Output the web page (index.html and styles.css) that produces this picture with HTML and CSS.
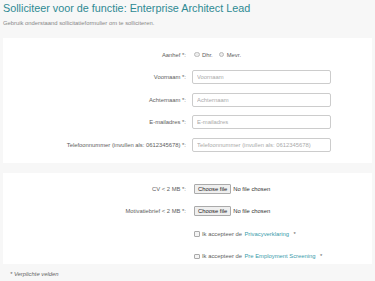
FILE: index.html
```html
<!DOCTYPE html>
<html lang="nl">
<head>
  <meta charset="UTF-8">
  <title>Solliciteren</title>
  <link rel="stylesheet" href="styles.css">
</head>
<body>

  <div class="page">
    <h1 class="title">Solliciteer voor de functie: Enterprise Architect Lead</h1>
    <p class="intro">Gebruik onderstaand sollicitatieformulier om te solliciteren.</p>

    <div class="panel">
      <div class="row">
        <span class="label">Aanhef *:</span>
        <div class="radios">
          <label class="option"><input type="radio" name="aanhef" class="radio"> Dhr.</label>
          <label class="option"><input type="radio" name="aanhef" class="radio"> Mevr.</label>
        </div>
      </div>

      <div class="row">
        <label class="label" for="voornaam">Voornaam *:</label>
        <input class="field" id="voornaam" type="text" placeholder="Voornaam">
      </div>

      <div class="row">
        <label class="label" for="achternaam">Achternaam *:</label>
        <input class="field" id="achternaam" type="text" placeholder="Achternaam">
      </div>

      <div class="row">
        <label class="label" for="email">E-mailadres *:</label>
        <input class="field" id="email" type="text" placeholder="E-mailadres">
      </div>

      <div class="row">
        <label class="label" for="telefoon">Telefoonnummer (invullen als: 0612345678) *:</label>
        <input class="field" id="telefoon" type="text" placeholder="Telefoonnummer (invullen als: 0612345678)">
      </div>
    </div>

    <div class="panel panel-files">
      <div class="row">
        <span class="label">CV &lt; 2 MB *:</span>
        <div class="file">
          <button type="button" class="file-btn">Choose file</button>
          <span>No file chosen</span>
        </div>
      </div>

      <div class="row">
        <span class="label">Motivatiebrief &lt; 2 MB *:</span>
        <div class="file">
          <button type="button" class="file-btn">Choose file</button>
          <span>No file chosen</span>
        </div>
      </div>

      <div class="row">
        <span></span>
        <label class="option check"><input type="checkbox" class="box"> Ik accepteer de <a href="#">Privacyverklaring</a> <span class="req">*</span></label>
      </div>

      <div class="row">
        <span></span>
        <label class="option check"><input type="checkbox" class="box"> Ik accepteer de <a href="#">Pre Employment Screening</a> <span class="req">*</span></label>
      </div>
    </div>

    <p class="note">* Verplichte velden</p>
  </div>

</body>
</html>
```

FILE: styles.css
```css
body {
  margin: 0;
  background-color: #f7f7f7;
  font-family: "Liberation Sans", Arial, sans-serif;
  font-size: 5.85px;
  color: #5e5e5e;
}

.page {
  padding: 2px 3px 0;
}

.title {
  margin: 0;
  font-size: 10.8px;
  font-weight: normal;
  line-height: 12.4px;
  color: #2e8a93;
}

.intro {
  margin: 5.6px 0 0;
  line-height: 6.7px;
  color: #888;
}

.panel {
  display: flex;
  flex-direction: column;
  gap: 8.5px;
  margin-top: 11.3px;
  padding: 9.5px 0 11px;
  background-color: #fff;
}

.panel-files {
  margin-top: 10px;
  padding: 9.3px 0 1px;
}

.row {
  display: grid;
  grid-template-columns: 183px 139px;
  column-gap: 6px;
  align-items: center;
  min-height: 14px;
}

.label {
  text-align: right;
}

.field {
  box-sizing: border-box;
  height: 14px;
  padding: 0 4px;
  font: inherit;
  color: #555;
  border: 1px solid #ccc;
  border-radius: 2px;
  outline: none;
}

.field::placeholder {
  color: #aaa;
}

.radios {
  display: flex;
  gap: 6px;
  padding-left: 2px;
}

.option {
  display: flex;
  align-items: center;
  gap: 2.5px;
  white-space: nowrap;
}

.radio,
.box {
  appearance: none;
  margin: 0;
  width: 5.5px;
  height: 5.5px;
  box-sizing: border-box;
  border: 1px solid #bbb;
  background-color: #ececec;
}

.radio {
  border-radius: 50%;
}

.box {
  border-radius: 1px;
  border-color: #aaa;
  background-color: #f4f4f4;
}

.check {
  padding-left: 2px;
}

.check a {
  color: #3a9bab;
  text-decoration: none;
}

.req {
  margin-left: 2px;
}

.file {
  display: flex;
  align-items: center;
  gap: 2px;
  padding-left: 2px;
  color: #333;
  white-space: nowrap;
}

.file-btn {
  height: 10px;
  padding: 0 3px;
  font: inherit;
  color: #222;
  background-color: #efefef;
  border: 1px solid #aaa;
  border-radius: 1px;
}

.note {
  margin: 7px 0 0 7px;
  color: #666;
  font-style: italic;
}
```
